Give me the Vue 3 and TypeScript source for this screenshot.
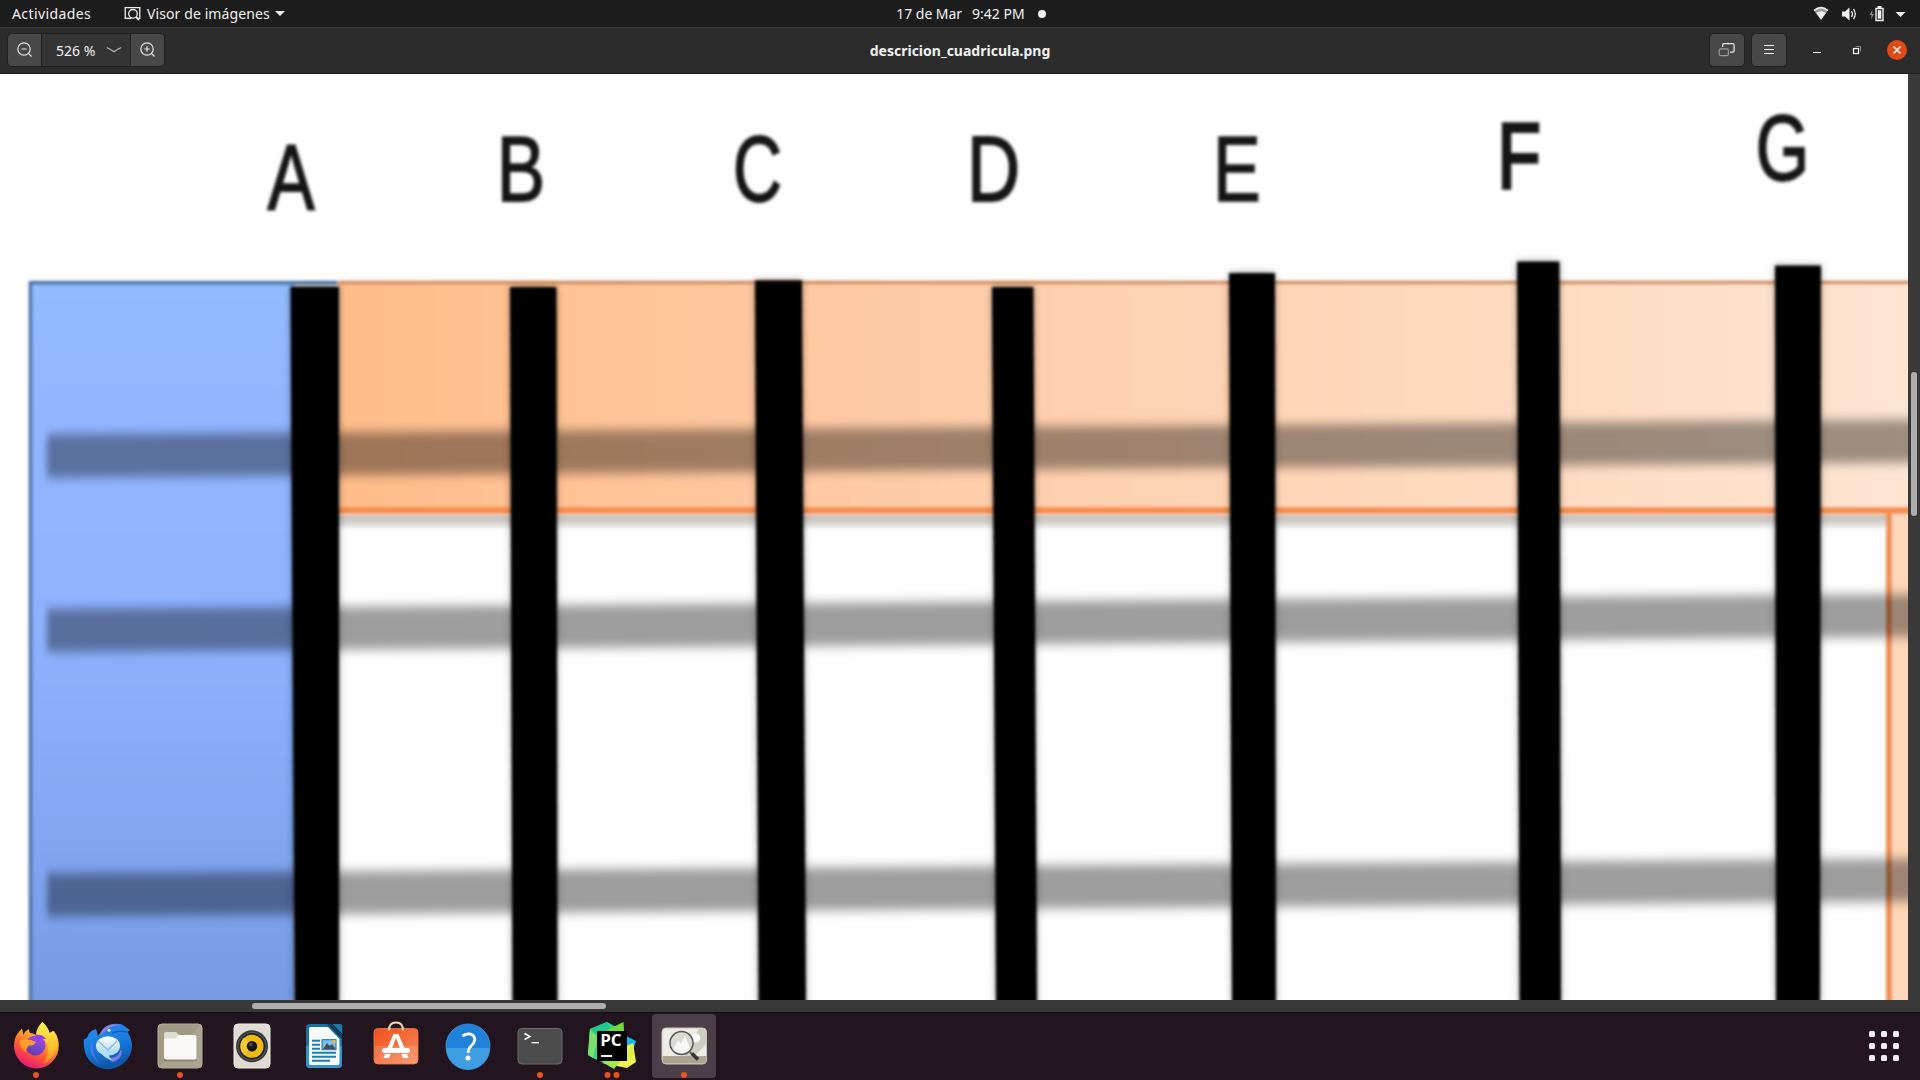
<script setup lang="ts">
interface Bar { label: string; pts: string; x: number; y: number; sx: number; weight: number }

const bars: Bar[] = [
  { label: 'A', pts: '290.5,212.5 339,212.5 339,930 294.5,930', x: 291, y: 135.5, sx: 0.76, weight: 1.8 },
  { label: 'B', pts: '510,213 556.5,213 557.5,930 512.5,930', x: 521, y: 126.5, sx: 0.78, weight: 1.8 },
  { label: 'C', pts: '755,206.5 802,206.5 806,930 758.5,930', x: 757.5, y: 127, sx: 0.73, weight: 1.8 },
  { label: 'D', pts: '992,213 1033.5,213 1037,930 996,930', x: 993.5, y: 126.5, sx: 0.79, weight: 2 },
  { label: 'E', pts: '1229,199 1275,199 1276,930 1232,930', x: 1237, y: 126.5, sx: 0.77, weight: 1.6 },
  { label: 'F', pts: '1517,187.5 1559.5,187.5 1561,930 1519.5,930', x: 1519, y: 114, sx: 0.76, weight: 3.6 },
  { label: 'G', pts: '1775,191.5 1821,191.5 1820,930 1776,930', x: 1782.5, y: 105.5, sx: 0.74, weight: 2 },
]

const rows = [
  { l: 382, r: 367 },
  { l: 556.5, r: 541.5 },
  { l: 821, r: 806 },
]

const apps: { id: string; dots: number[]; active?: boolean }[] = [
  { id: 'firefox', dots: [36] },
  { id: 'thunderbird', dots: [] },
  { id: 'files', dots: [36] },
  { id: 'rhythmbox', dots: [] },
  { id: 'writer', dots: [] },
  { id: 'software', dots: [] },
  { id: 'help', dots: [] },
  { id: 'terminal', dots: [36] },
  { id: 'pycharm', dots: [31.5, 40.5] },
  { id: 'viewer', dots: [36], active: true },
]
</script>

<template>
  <div class="desktop">
    <header class="topbar">
      <div class="side left">
        <span class="act">Actividades</span>
        <svg class="app-ico" width="18" height="16" viewBox="0 0 18 16" fill="none" stroke="#eee" stroke-width="1.3">
          <path d="M4.5 12.4H1.2V1.7H15.8V12.4H14" />
          <circle cx="9" cy="7.8" r="4.3" />
          <path d="M12 11l3 3" stroke-width="1.8" />
          <path d="M3 12.4h4.500" />
        </svg>
        <span class="appname">Visor de imágenes</span>
        <i class="tri"></i>
      </div>
      <div class="clock"><span class="date">17 de Mar</span><span class="time">9:42 PM</span><i class="note"></i></div>
      <div class="side right">
        <svg width="96" height="18" viewBox="0 0 96 18">
          <path d="M1 5.600Q8 .2 15 5.600L8 15z" fill="#999" />
          <path d="M1 5.600Q8 -.4 15 5.600" fill="none" stroke="#f2f2f2" stroke-width="1.5" />
          <path d="M3.200 8Q8 4.500 12.800 8L8 14.500z" fill="#f2f2f2" />
          <path d="M29 6.500h3l4.500-4v13l-4.500-4h-3z" fill="#f2f2f2" />
          <path d="M38.500 6q2 3 0 6M40.500 4q3.500 5 0 10" fill="none" stroke="#eee" stroke-width="1.300" />
          <path d="M59.500 4.500L56.500 10h2l-.5 4.500L61 9h-2z" fill="#8a8a8a" />
          <path d="M63 3.500h7v12h-7z" fill="none" stroke="#f2f2f2" stroke-width="1.400" />
          <path d="M64.700 5.200h3.600v8.600h-3.600zM64.500 1h4v2h-4z" fill="#f2f2f2" />
          <path d="M82.500 7h10l-5 5z" fill="#f2f2f2" />
        </svg>
      </div>
    </header>

    <div class="headerbar">
      <div class="side left zoom">
        <button class="btn zl">
          <svg width="18" height="18" viewBox="0 0 18 18" fill="none" stroke="#e6e6e6" stroke-width="1.200"><circle cx="8" cy="8" r="6.200" /><path d="M5.500 8h5M12.500 12.500l3 3" /></svg>
        </button>
        <div class="level"><span>526 %</span>
          <svg width="16" height="8" viewBox="0 0 16 8" fill="none" stroke="#bbb" stroke-width="1.200"><path d="M.8 1.500Q3 2.500 8 5.800Q13 2.500 15.200 1.500" /></svg>
        </div>
        <button class="btn zr">
          <svg width="18" height="18" viewBox="0 0 18 18" fill="none" stroke="#e6e6e6" stroke-width="1.200"><circle cx="8" cy="8" r="6.200" /><path d="M5.300 8h5.400M8 5.300v5.400M12.500 12.500l3 3" /></svg>
        </button>
      </div>
      <h1>descricion_cuadricula.png</h1>
      <div class="side right ctrls">
        <button class="btn sq">
          <svg width="18" height="16" viewBox="0 0 18 16" fill="none" stroke-width="1.200"><path d="M4.600 5V3.200q0-1.500 1.500-1.500h8.500q1.500 0 1.500 1.500v5.500q0 1.500-1.500 1.500H12" stroke="#eee" /><rect x="1.200" y="6.800" width="9.200" height="6.800" rx="1.500" stroke="#999" /></svg>
        </button>
        <button class="btn sq">
          <svg width="12" height="12" viewBox="0 0 12 12" stroke="#eee"><path d="M1 1.500h10M1 5.500h10M1 9.500h10" /></svg>
        </button>
        <svg class="win" width="111" height="24" viewBox="0 0 111 24">
          <path d="M17 14.500h8" stroke="#fff" />
          <path d="M59.500 8.500h5v5" fill="none" stroke="#888" />
          <rect x="57.500" y="10.500" width="5" height="5" fill="none" stroke="#fff" stroke-width="1.200" />
          <circle cx="101" cy="12" r="10" fill="#e24a15" />
          <path d="M97.500 8.500l7 7M104.500 8.500l-7 7" stroke="#fff" stroke-width="1.500" />
        </svg>
      </div>
    </div>

    <main class="view">
      <svg class="picture" width="1908" height="926" viewBox="0 0 1908 926">
        <defs>
          <linearGradient id="blue" x1="0" y1="0" x2="0" y2="1">
            <stop offset="0" stop-color="#90bbff" /><stop offset=".18" stop-color="#91b5ff" /><stop offset=".45" stop-color="#8eb2ff" /><stop offset=".7" stop-color="#83a8f5" /><stop offset="1" stop-color="#749ae3" />
          </linearGradient>
          <linearGradient id="orange"><stop offset="0" stop-color="#ffbc8a" /><stop offset=".35" stop-color="#ffcba6" /><stop offset=".65" stop-color="#fed8bb" /><stop offset="1" stop-color="#fee5d3" /></linearGradient>
          <linearGradient id="lip" x1="0" y1="0" x2="0" y2="1"><stop offset="0" stop-color="#c8bcb4" /><stop offset=".45" stop-color="#d0cdcb" /><stop offset="1" stop-color="#fdfdfd" /></linearGradient>
          <filter id="b1" filterUnits="userSpaceOnUse" x="-20" y="-20" width="1950" height="980"><feGaussianBlur stdDeviation="1.400" /></filter>
          <filter id="bt" filterUnits="userSpaceOnUse" x="-20" y="-20" width="1950" height="980"><feGaussianBlur stdDeviation="1.800" /></filter>
          <filter id="b3" filterUnits="userSpaceOnUse" x="-20" y="-20" width="1960" height="980"><feGaussianBlur stdDeviation="3 5.500" /></filter>
          <filter id="b5" filterUnits="userSpaceOnUse" x="-20" y="-20" width="1950" height="980"><feGaussianBlur stdDeviation="4.500" /></filter>
        </defs>
        <rect width="1908" height="926" fill="#fefefe" />
        <g filter="url(#b1)">
          <rect x="29" y="207" width="266" height="740" fill="url(#blue)" />
          <path d="M30.500 950V208.800H339" fill="none" stroke="#466a9c" stroke-width="3.500" />
          <rect x="338" y="207" width="1600" height="228" fill="url(#orange)" />
          <path d="M339 208.500H1930" stroke="#d08c5c" stroke-width="3.500" />
          <rect x="335" y="441" width="1553" height="15" fill="url(#lip)" />
          <rect x="1888" y="438" width="40" height="500" fill="#ffd7ba" />
          <path d="M1889 438V950" stroke="#ec9055" stroke-width="6" />
          <path d="M335 436.500H1930" stroke="#f88f4c" stroke-width="7" />
        </g>
        <g filter="url(#b3)">
          <polygon v-for="r in rows" :key="r.l" :points="`47,${r.l - 21.5} 1930,${r.r - 21.5} 1930,${r.r + 21.5} 47,${r.l + 21.5}`" fill="#000" fill-opacity=".38" />
        </g>
        <g filter="url(#b5)" opacity=".32">
          <polygon v-for="b in bars" :key="b.label" :points="b.pts" />
        </g>
        <g filter="url(#b1)">
          <polygon v-for="b in bars" :key="b.label" :points="b.pts" />
        </g>
        <g filter="url(#bt)">
          <text
            v-for="b in bars" :key="b.label" class="letter" text-anchor="middle"
            :stroke-width="b.weight"
            :transform="`translate(${b.x} ${b.y}) scale(${b.sx} 1)`"
          >{{ b.label }}</text>
        </g>
      </svg>
      <div class="vtrack"><div class="vthumb"></div></div>
    </main>
    <div class="htrack"><div class="hthumb"></div></div>

    <nav class="dock">
      <div v-for="a in apps" :key="a.id" class="item">
        <svg width="72" height="68" viewBox="0 0 72 68">
          <rect v-if="a.active" x="4" y="2" width="64" height="64" rx="4" fill="#4c3f4a" />

          <g v-if="a.id === 'firefox'">
            <defs>
              <linearGradient id="ff" x1=".8" y1="0" x2=".3" y2="1"><stop offset="0" stop-color="#ffe84a" /><stop offset=".4" stop-color="#ffa328" /><stop offset=".7" stop-color="#ff5139" /><stop offset="1" stop-color="#e3147f" /></linearGradient>
              <linearGradient id="ffp" x1=".8" y1="0" x2=".3" y2="1"><stop offset="0" stop-color="#a14cf5" /><stop offset="1" stop-color="#5a3fae" /></linearGradient>
              <linearGradient id="ffy" x1="0" y1="0" x2="0" y2="1"><stop offset="0" stop-color="#fff44f" /><stop offset=".6" stop-color="#ffc02d" /><stop offset="1" stop-color="#ff8a2a" /></linearGradient>
            </defs>
            <path d="M14 34Q14 26 18 21L22 16.500 23.500 23Q25 19 28.500 17L30 21Q33 21 36 23L42 10Q48 15 49.500 21L54 19Q59 26 58.800 34A22.400 22.400 0 0 1 14 34z" fill="url(#ff)" />
            <path d="M36 22Q37 15 42.500 10Q48 15 49.500 21L53 19Q57.500 26 57 33Q55 47 43 52Q50 43 47 32Q44 24 36 22z" fill="url(#ffy)" />
            <circle cx="35.500" cy="33.500" r="10" fill="url(#ffp)" />
            <path d="M36 23Q42 22 46 27Q40 26 38 28z" fill="#8f3df0" />
            <path d="M20 28.500Q28 26 36 30Q34 34 29 33.500Q26 36 26 40Q19 36 20 28.500z" fill="#ff9a2b" />
          </g>

          <g v-else-if="a.id === 'thunderbird'">
            <defs><linearGradient id="tb" x1="0" y1="0" x2=".3" y2="1"><stop offset="0" stop-color="#2b8ff0" /><stop offset=".6" stop-color="#1678dc" /><stop offset="1" stop-color="#0f56a8" /></linearGradient>
              <linearGradient id="tw" x1="0" y1="0" x2="0" y2="1"><stop offset="0" stop-color="#fff" /><stop offset="1" stop-color="#9fd2fb" /></linearGradient></defs>
            <path d="M12 27Q14 28 16 24Q17 19 24 17Q25 20 26 24L31 17Q38 10 50 12.500L58 18 55.500 20Q60 27 60 34A24 24 0 0 1 13 40Q11 32 12 27z" fill="url(#tb)" />
            <path d="M29 24Q29 14 41 12.500L50 12.500Q39 13.500 34 18Q31 21 29 24z" fill="#9a7bea" />
            <path d="M20 30Q15 42 27 51Q20 43 20 30z" fill="#8f72e8" opacity=".6" />
            <path d="M48 39Q46 48 34 45Q38 47 40 50Q50 48 50 38z" fill="#7a7ceb" />
            <ellipse cx="36" cy="34" rx="12" ry="9.800" fill="url(#tw)" />
            <path d="M28 39q4 8 13 9.500q-5-3-4-7z" fill="#b9defb" />
            <path d="M26 29l10 9 9-9" fill="none" stroke="#8fb7dc" stroke-width="1.300" />
            <circle cx="37" cy="18.300" r="1.400" fill="#fff" />
            <path d="M40 21Q47 18 55 20" stroke="#1261bd" stroke-width="1.500" fill="none" />
          </g>

          <g v-else-if="a.id === 'files'">
            <rect x="14" y="12" width="44" height="44" rx="4" fill="#a19b84" stroke="#b7b19e" />
            <path d="M15 55L57 13v39q0 4-4 4H18z" fill="#aaa590" />
            <path d="M20 23v-1q0-2 2-2h10l3 3v5H20z" fill="#dfdcd3" />
            <path d="M20 28q0-1.500 1.500-1.500h10l3-3.500H50.500q2 0 2 2v22q0 1.500-2 1.500h-28q-2.500 0-2.500-2z" fill="#6d684f" opacity=".5" transform="translate(0 1)" />
            <path d="M20 28q0-1.500 1.500-1.500h10l3-3.500H50.500q2 0 2 2v21q0 1.500-2 1.500h-28q-2.500 0-2.500-2z" fill="#faf9f8" />
          </g>

          <g v-else-if="a.id === 'rhythmbox'">
            <rect x="18" y="12" width="36" height="44" rx="4" fill="#dfdbd0" stroke="#efece4" />
            <circle cx="36" cy="34.300" r="16" fill="#36383d" /><circle cx="36" cy="34.300" r="14" fill="#23252a" stroke="#666a70" stroke-width=".8" />
            <circle cx="36" cy="34.300" r="11.500" fill="#f2b90f" /><path d="M36 34.300L28 25.500A12 12 0 0 0 28 43z" fill="#ffd447" opacity=".6" />
            <circle cx="36" cy="34.300" r="5.200" fill="#16181b" /><circle cx="34.800" cy="32.600" r="1.800" fill="#4f5254" />
          </g>

          <g v-else-if="a.id === 'writer'">
            <path d="M22 12h20l12 11v29q0 4-4 4H22q-4 0-4-4V16q0-4 4-4z" fill="#1772a2" /><path d="M18 34h36v18q0 4-4 4H22q-4 0-4-4z" fill="#3096c9" />
            <path d="M23 15h17l11.500 12v24q0 2-2 2H23q-2 0-2-2V17q0-2 2-2z" fill="#f8f9fa" />
            <path d="M44.500 12H52q2.300 0 2.300 2v8z" fill="#1b79ab" /><path d="M39 12l15 15v-4L44 12z" fill="#083e60" />
            <path d="M24 28.700h8M24 32.700h8M24 36.700h8M24 40.700h24M24 44.700h24M24 48.700h18" stroke="#1b7fb7" stroke-width="2" />
            <rect x="34" y="27.700" width="14" height="10" fill="#75c2ee" stroke="#1870a0" /><path d="M35 37l4-6 3 3 2-2 3.500 5z" fill="#4d4c4a" /><path d="M44 28h3.500v3q-3 0-3.500-3z" fill="#f8b62c" />
          </g>

          <g v-else-if="a.id === 'software'">
            <defs><linearGradient id="sw" x1="0" y1="0" x2="1" y2="1"><stop offset="0" stop-color="#f1511c" /><stop offset="1" stop-color="#f58c5c" /></linearGradient></defs>
            <rect x="14" y="16.500" width="44" height="35.500" rx="4" fill="url(#sw)" stroke="#f27648" stroke-width=".8" /><path d="M15 34h42.500v14q0 3.500-4 3.500H18.500q-3.500 0-3.500-3.500z" fill="#fff" opacity=".13" />
            <path d="M29 18.500Q29 10.500 36 10.500Q43 10.500 43 18.500" fill="none" stroke="#f0dcb0" stroke-width="1.900" />
            <path d="M33.500 22h5L44 35h-4.500L36 26l-3.500 9H28z" fill="#fff" /><rect x="22" y="36" width="28" height="5" rx="2.500" fill="#fff" /><path d="M25 42h5.500l-1.500 4h-5.500zM41.500 42H47l1.500 4h-5.500z" fill="#fff" /><path d="M28 34.500h4.700L32 37h-5zM39.300 34.500H44l1 2.500h-5z" fill="#fff" />
          </g>

          <g v-else-if="a.id === 'help'">
            <circle cx="36" cy="34" r="22" fill="#1f81d9" stroke="#3c9de8" stroke-width=".8" /><path d="M14 36h44a22 22 0 0 1-44 0z" fill="#3f9ee2" />
            <path d="M30.500 24Q35 21 39 22.200Q43 24 42.800 28Q42 31.500 39 34Q36.200 36.500 36.200 41" fill="none" stroke="#fff" stroke-width="2.800" /><circle cx="36" cy="46" r="2.500" fill="#fff" />
          </g>

          <g v-else-if="a.id === 'terminal'">
            <rect x="14" y="16.500" width="44" height="35.500" rx="4" fill="#4c4c4c" stroke="#6a6a6a" stroke-width="1" />
            <path d="M20.500 21.500l5.500 3-5.500 3" fill="none" stroke="#fff" stroke-width="1.500" /><path d="M27.500 30.700h7.500" stroke="#fff" stroke-width="1.300" />
          </g>

          <g v-else-if="a.id === 'pycharm'">
            <path d="M14 17L31 10l13 7-6 38-19-8-7-4z" fill="#2bd991" /><path d="M14 17L31 10l4 8-15 12-8 13z" fill="#1fc88b" /><path d="M14 17l8 8-5 21-5-3z" fill="#7ce06a" />
            <path d="M31 18L47.500 10 48 19 43 25z" fill="#6edc3d" /><path d="M44 21l16 8-3 9-10 5z" fill="#13b9eb" /><path d="M44 37l13-6 3 19-9 6-25-5 20-4z" fill="#f1f44a" /><path d="M26 50l20-3-8 10z" fill="#9cea50" /><path d="M46 46l12-14-2 16z" fill="#d9f04a" />
            <rect x="21" y="19" width="30" height="30" fill="#000" />
            <text x="24.200" y="33.800" class="pc" textLength="21.500" lengthAdjust="spacingAndGlyphs">PC</text><path d="M25 44h11" stroke="#fff" stroke-width="2" />
          </g>

          <g v-else>
            <rect x="14" y="16" width="44.500" height="36" rx="4" fill="#edece5" stroke="#c8c4b7" /><path d="M51 16.500h3.500q3.500 0 3.500 3.500v12L47 44H37z" fill="#d0cdc2" />
            <path d="M14.500 44h43.500v4q0 3.500-3.500 3.500H18q-3.500 0-3.500-3.500z" fill="#aaa391" /><circle cx="48" cy="26" r="4.300" fill="#fff" />
            <circle cx="33.500" cy="31" r="11.500" fill="#dcdad3" stroke="#55585b" stroke-width="1.500" /><path d="M25 38l5-10 3 4 4-9 5 14q-8 8-17 1z" fill="#f7f7f4" />
            <path d="M42 40l3 3" stroke="#55585b" stroke-width="2" /><path d="M44 41.500l6 6" stroke="#303335" stroke-width="3.500" />
          </g>
          <circle v-for="d in a.dots" :key="d" :cx="d" cy="63" r="3" fill="#e95420" />
        </svg>
      </div>
      <div class="apps"><i v-for="n in 9" :key="n"></i></div>
    </nav>
  </div>
</template>

<style>
html, body { margin: 0; background: #22151f; overflow: hidden; }
</style>

<style scoped>
.desktop { width: 1920px; height: 1080px; display: flex; flex-direction: column; font-family: "Noto Sans", "Open Sans", sans-serif; color: #f2f2f2; overflow: hidden; }
.topbar { height: 27px; background: #1d1d1d; display: grid; grid-template-columns: 1fr auto 1fr; align-items: center; border-bottom: 1px solid #3a3a3a; font-size: 14px; line-height: 26px; }
.side { display: flex; align-items: center; min-width: 0; }
.right { justify-content: flex-end; }
.left { padding-left: 12px; }
.act { width: 112px; letter-spacing: .4px; }
.app-ico { margin-right: 5px; }
.appname { letter-spacing: .1px; }
.tri { width: 0; height: 0; border: 5px solid transparent; border-top: 5px solid #f2f2f2; border-bottom: 0; margin-left: 5px; }
.clock { display: flex; align-items: center; padding-left: 22px; }
.date { letter-spacing: -.05px; }
.time { margin-left: 10px; }
.note { width: 8px; height: 8px; border-radius: 50%; background: #f2f2f2; margin-left: 13px; }
.topbar .right { padding-right: 11px; }
.headerbar { height: 46px; box-sizing: border-box; background: #2c2c2c; border-bottom: 1px solid #1e1e1e; display: grid; grid-template-columns: 1fr auto 1fr; align-items: center; font-size: 14px; padding-bottom: 1px; }
.headerbar h1 { margin: 0; font-size: 14px; font-weight: 700; letter-spacing: 0; }
.zoom { padding-left: 7px; }
.btn { box-sizing: border-box; height: 34px; width: 35px; padding: 0; margin: 0; border: 1px solid #202020; background: #484848; display: flex; align-items: center; justify-content: center; }
.zl { border-radius: 5px 0 0 5px; }
.zr { border-radius: 0 5px 5px 0; }
.sq { border-radius: 5px; width: 36px; margin-right: 6px; }
.sq + .sq { margin-right: 0; }
.level { box-sizing: border-box; height: 34px; width: 88px; background: #343434; border-top: 1px solid #202020; border-bottom: 1px solid #202020; display: flex; align-items: center; justify-content: space-between; padding: 0 8px 0 14px; }
.ctrls { padding-right: 13px; }
.win { margin-left: 9px; }
.view { height: 926px; display: flex; background: #383838; }
.picture { display: block; }
.vtrack { width: 12px; background: #393939; padding: 298px 3px 0; box-sizing: border-box; }
.vthumb { height: 144px; width: 6px; border-radius: 3px; background: #afafaf; }
.htrack { height: 12px; background: #383838; box-sizing: border-box; padding: 3px 0 0 252px; }
.hthumb { height: 6px; width: 354px; border-radius: 3px; background: #afafaf; }
.dock { height: 68px; background: #22151f; display: flex; box-shadow: inset 0 1px 0 #180d16; }
.item { width: 72px; height: 68px; }
.item svg { display: block; }
.apps { margin-left: auto; margin-right: 21px; margin-top: 19px; display: grid; grid-template-columns: repeat(3, 6px); grid-auto-rows: 6px; gap: 6px; }
.apps i { background: #f0edf0; border-radius: 1.5px; }
.letter { font-family: "Liberation Sans", Arial, sans-serif; font-size: 93px; fill: #161616; stroke: #161616; }
.pc { font-family: "Open Sans", "Noto Sans", sans-serif; font-weight: 700; font-size: 15.500px; fill: #fff; }
</style>
